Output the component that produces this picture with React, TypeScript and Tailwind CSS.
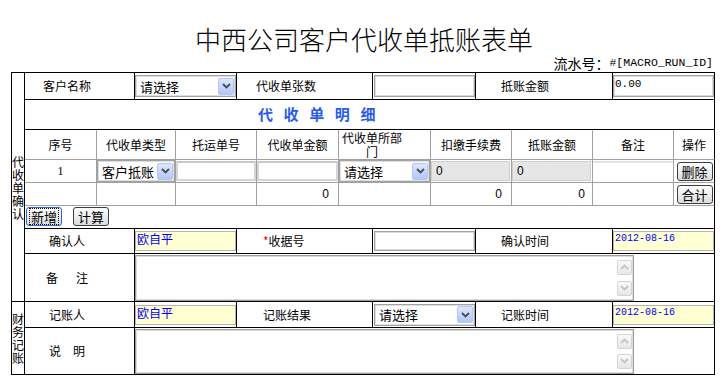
import React from "react";

const K = "border-r border-b border-black";
const G = "border-r border-b border-r-[#a0a0a0] border-b-[#a0a0a0]";
const GL = "border-r border-b border-r-black border-b-[#a0a0a0]";

function Arrow() {
  return (
    <span className="flex h-[17px] w-[16px] items-center justify-center rounded-[2px] border border-[#b5c7f3] bg-linear-to-b from-[#dde6fe] to-[#b2c6f8]">
      <svg width="9" height="6" viewBox="0 0 9 6">
        <path d="M1 1l3.5 3.5L8 1" fill="none" stroke="#4b4b4b" strokeWidth="1.8" />
      </svg>
    </span>
  );
}

function Select({ text, className }: { text: string; className: string }) {
  return (
    <div
      className={`flex items-center justify-between border border-[#a3a3a3] bg-white pl-[4px] pr-[1px] text-[13px] leading-none shadow-[inset_0_0_0_1px_#dedede] ${className}`}
    >
      <span>{text}</span>
      <Arrow />
    </div>
  );
}

function Field({ children, className }: { children?: React.ReactNode; className: string }) {
  return (
    <div
      className={`border border-[#a3a3a3] pl-[1px] pt-[1px] shadow-[inset_0_0_0_1px_#dcdcdc] ${className}`}
    >
      {children}
    </div>
  );
}

function Yellow({ text, mono }: { text: string; mono?: boolean }) {
  return (
    <div
      className={`h-[20px] w-[101px] border border-[#b4b4b4] bg-[#ffffd4] pl-[1px] text-[#0000ff] ${
        mono ? "font-['Liberation_Mono',monospace] text-[10px] leading-[14px]" : "text-[12px] leading-[14px]"
      }`}
    >
      {text}
    </div>
  );
}

function ScrollBtn({ up }: { up?: boolean }) {
  return (
    <span className="flex h-[15px] w-[15px] items-center justify-center rounded-[2px] border border-[#d4d4d4] bg-linear-to-b from-[#fafafa] to-[#e6e6e6]">
      <svg width="9" height="6" viewBox="0 0 9 6">
        <path d={up ? "M1 5l3.5-3.5L8 5" : "M1 1l3.5 3.5L8 1"} fill="none" stroke="#c4c4c4" strokeWidth="1.8" />
      </svg>
    </span>
  );
}

function TextArea({ h }: { h: string }) {
  return (
    <div
      className={`flex w-[499px] justify-end border border-[#9e9e9e] bg-white p-[1px] shadow-[inset_0_0_0_1px_#dcdcdc] ${h}`}
    >
      <div className="flex w-[16px] flex-col items-center justify-between py-[3px]">
        <ScrollBtn up />
        <ScrollBtn />
      </div>
    </div>
  );
}

function Btn({ text, focus }: { text: string; focus?: boolean }) {
  return (
    <div
      className={`flex h-[19px] w-[36px] items-center justify-center rounded-[3px] border bg-linear-to-b from-[#ffffff] to-[#dcdcdc] text-[13px] leading-none ${
        focus ? "border-[#2f62dc]" : "border-[#3d3d3d]"
      }`}
    >
      <span className={focus ? "border border-dotted border-black px-[1px] py-[1px]" : ""}>{text}</span>
    </div>
  );
}

function Side({ text }: { text: string }) {
  return (
    <div className={`flex w-[13px] items-center ${K}`}>
      <div className="w-[12px] text-[12px] leading-[13px] break-all">{text}</div>
    </div>
  );
}

export default function App() {
  return (
    <div className="h-[388px] w-[728px] bg-white text-black font-['Noto_Sans_CJK_SC','Noto_Sans',sans-serif]">
      {/* title */}
      <div className="h-[54px] pt-[24px] text-center text-[26px] font-light leading-[30px]">中西公司客户代收单抵账表单</div>
      <div className="flex h-[18px] items-center justify-end pr-[15px] text-[14px] leading-none">
        流水号：<span className="font-['Liberation_Mono',monospace] text-[11.5px]">#[MACRO_RUN_ID]</span>
      </div>

      {/* main table */}
      <div className="ml-[11px] w-[704px] border-l border-t border-black text-[12px]">
        {/* 代收单确认 */}
        <div className="flex">
          <Side text="代收单确认" />
          <div className="flex w-[690px] flex-col">
            <div className="flex h-[27px]">
              <div className={`flex w-[110px] items-center pl-[18px] ${K}`}>客户名称</div>
              <div className={`flex w-[102px] items-center ${K}`}>
                <Select text="请选择" className="h-[22px] w-[101px]" />
              </div>
              <div className={`flex w-[136px] items-center pl-[19px] ${K}`}>代收单张数</div>
              <div className={`flex w-[103px] items-center pl-[1px] ${K}`}>
                <Field className="h-[22px] w-[101px]" />
              </div>
              <div className={`flex w-[137px] items-center pl-[25px] ${K}`}>抵账金额</div>
              <div className={`flex w-[102px] items-center ${K}`}>
                <Field className="h-[22px] w-[101px] font-['Liberation_Mono',monospace] text-[11px] leading-[14px]">
                  0.00
                </Field>
              </div>
            </div>

            <div className={`flex h-[30px] items-center pl-[233px] ${K}`}>
              <span className="text-[15px] font-bold tracking-[10.6px] text-[#2a5ce8]">代收单明细</span>
            </div>

            {/* detail header */}
            <div className="flex h-[30px]">
              <div className={`flex w-[72px] items-center justify-center ${G}`}>序号</div>
              <div className={`flex w-[79px] items-center justify-center ${G}`}>代收单类型</div>
              <div className={`flex w-[81px] items-center justify-center ${G}`}>托运单号</div>
              <div className={`flex w-[82px] items-center justify-center ${G}`}>代收单金额</div>
              <div className={`flex w-[92px] items-center ${G}`}>
                <div className="flex w-[66px] flex-col items-center leading-[14px]">
                  <span>代收单所部</span>
                  <span>门</span>
                </div>
              </div>
              <div className={`flex w-[81px] items-center justify-center ${G}`}>扣缴手续费</div>
              <div className={`flex w-[81px] items-center justify-center ${G}`}>抵账金额</div>
              <div className={`flex w-[81px] items-center justify-center ${G}`}>备注</div>
              <div className={`flex w-[41px] items-center justify-center ${GL}`}>操作</div>
            </div>

            {/* detail row 1 */}
            <div className="flex h-[23px]">
              <div className={`flex w-[72px] items-center justify-center font-['Liberation_Serif',serif] ${G}`}>1</div>
              <div className={`flex w-[79px] ${G}`}>
                <Select text="客户抵账" className="h-[22px] w-[78px]" />
              </div>
              <div className={`flex w-[81px] items-center ${G}`}>
                <div className="h-[20px] w-[80px] border-2 border-[#d6d6d6] border-t-[#c8c8c8] bg-white" />
              </div>
              <div className={`flex w-[82px] items-center ${G}`}>
                <div className="h-[20px] w-[81px] border-2 border-[#d6d6d6] border-t-[#c8c8c8] bg-white" />
              </div>
              <div className={`flex w-[92px] ${G}`}>
                <Select text="请选择" className="h-[22px] w-[91px]" />
              </div>
              <div className={`flex w-[81px] items-center ${G}`}>
                <div className="h-[20px] w-[79px] border border-[#cfcfcf] bg-[#e6e6e6] pl-[4px] font-['Liberation_Sans',sans-serif] text-[12px] leading-[18px]">
                  0
                </div>
              </div>
              <div className={`flex w-[81px] items-center ${G}`}>
                <div className="h-[20px] w-[79px] border border-[#cfcfcf] bg-[#e6e6e6] pl-[4px] font-['Liberation_Sans',sans-serif] text-[12px] leading-[18px]">
                  0
                </div>
              </div>
              <div className={`flex w-[81px] items-center ${G}`}>
                <div className="h-[20px] w-[80px] border-t-2 border-[#e4e4e4] bg-white" />
              </div>
              <div className={`flex w-[41px] items-center justify-center pl-[1px] ${GL}`}>
                <Btn text="删除" />
              </div>
            </div>

            {/* detail row 2 */}
            <div className="flex h-[23px]">
              <div className={`w-[72px] ${G}`} />
              <div className={`w-[79px] ${G}`} />
              <div className={`w-[81px] ${G}`} />
              <div className={`flex w-[82px] items-center justify-end pr-[9px] font-['Liberation_Sans',sans-serif] ${G}`}>0</div>
              <div className={`w-[92px] ${G}`} />
              <div className={`flex w-[81px] items-center justify-end pr-[9px] font-['Liberation_Sans',sans-serif] ${G}`}>0</div>
              <div className={`flex w-[81px] items-center justify-end pr-[7px] font-['Liberation_Sans',sans-serif] ${G}`}>0</div>
              <div className={`w-[81px] ${G}`} />
              <div className={`flex w-[41px] items-center justify-center pl-[1px] ${GL}`}>
                <Btn text="合计" />
              </div>
            </div>

            {/* buttons */}
            <div className={`flex h-[23px] items-start gap-[11px] pl-[1px] pt-[1px] ${K}`}>
              <Btn text="新增" focus />
              <Btn text="计算" />
            </div>

            <div className="flex h-[25px]">
              <div className={`flex w-[110px] items-center pl-[24px] ${K}`}>确认人</div>
              <div className={`flex w-[102px] items-center ${K}`}>
                <Yellow text="欧自平" />
              </div>
              <div className={`flex w-[136px] items-center pl-[26px] ${K}`}>
                <span className="text-[#ff0000]">*</span>收据号
              </div>
              <div className={`flex w-[103px] items-center pl-[1px] ${K}`}>
                <Field className="h-[20px] w-[101px]" />
              </div>
              <div className={`flex w-[137px] items-center pl-[25px] ${K}`}>确认时间</div>
              <div className={`flex w-[102px] items-center ${K}`}>
                <Yellow text="2012-08-16" mono />
              </div>
            </div>

            <div className="flex h-[48px]">
              <div className={`flex w-[110px] items-center gap-[18px] pl-[21px] ${K}`}>
                <span>备</span>
                <span>注</span>
              </div>
              <div className={`flex w-[580px] items-center ${K}`}>
                <TextArea h="h-[46px]" />
              </div>
            </div>
          </div>
        </div>

        {/* 财务记账 */}
        <div className="flex">
          <Side text="财务记账" />
          <div className="flex w-[690px] flex-col">
            <div className="flex h-[26px]">
              <div className={`flex w-[110px] items-center pl-[24px] ${K}`}>记账人</div>
              <div className={`flex w-[102px] items-center ${K}`}>
                <Yellow text="欧自平" />
              </div>
              <div className={`flex w-[136px] items-center pl-[26px] ${K}`}>记账结果</div>
              <div className={`flex w-[103px] items-center pl-[1px] ${K}`}>
                <Select text="请选择" className="h-[22px] w-[101px]" />
              </div>
              <div className={`flex w-[137px] items-center pl-[25px] ${K}`}>记账时间</div>
              <div className={`flex w-[102px] items-center ${K}`}>
                <Yellow text="2012-08-16" mono />
              </div>
            </div>
            <div className="flex h-[47px]">
              <div className={`flex w-[110px] items-center gap-[12px] pl-[24px] ${K}`}>
                <span>说</span>
                <span>明</span>
              </div>
              <div className={`flex w-[580px] items-center ${K}`}>
                <TextArea h="h-[45px]" />
              </div>
            </div>
          </div>
        </div>
      </div>
    </div>
  );
}
